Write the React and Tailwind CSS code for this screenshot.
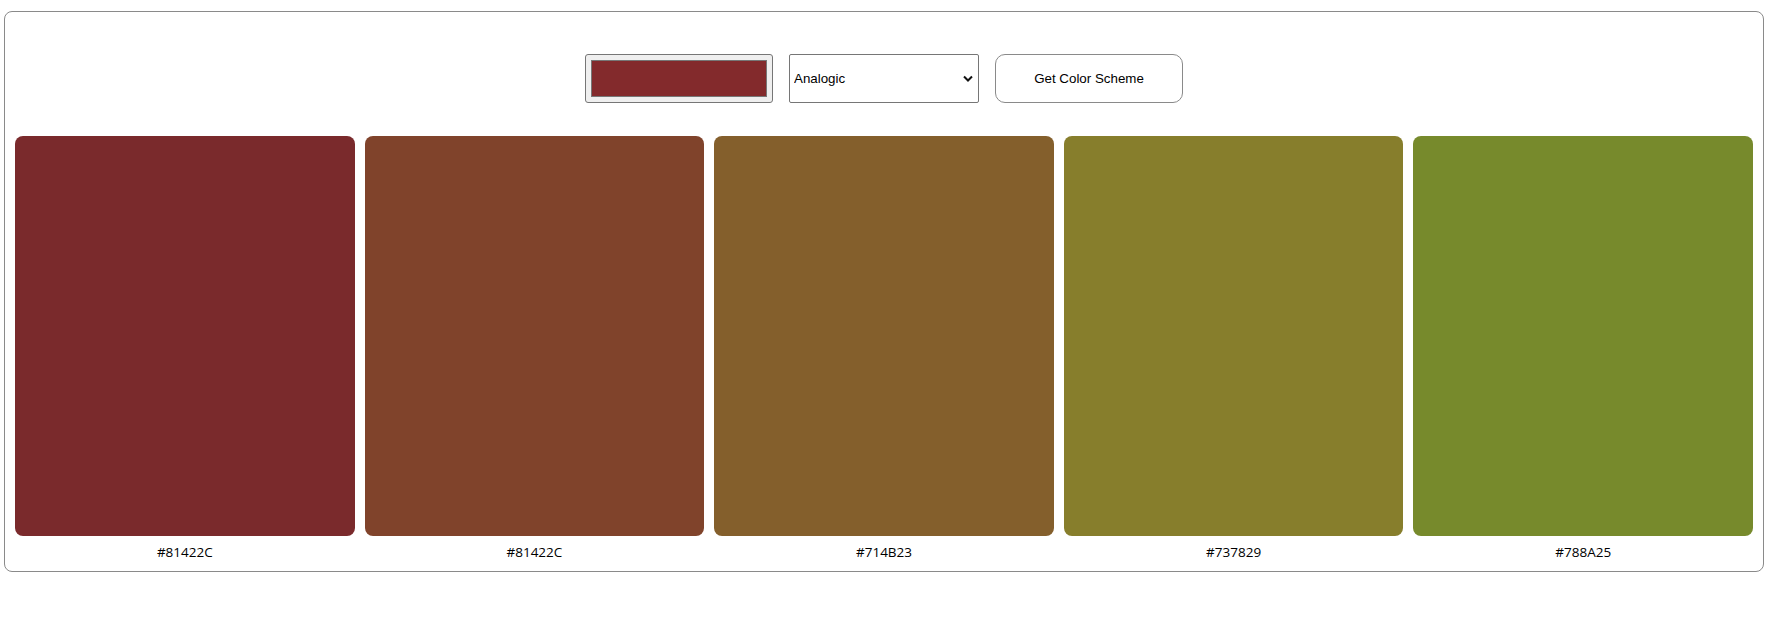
import React, { useState } from "react";

const colors = [
  { bg: "bg-[#7a2a2c]", label: "#81422C" },
  { bg: "bg-[#80432b]", label: "#81422C" },
  { bg: "bg-[#845f2c]", label: "#714B23" },
  { bg: "bg-[#877e2c]", label: "#737829" },
  { bg: "bg-[#778a2c]", label: "#788A25" },
];

const App = () => {
  const [mode, setMode] = useState("analogic");

  return (
    <div className="w-full min-h-[625px] bg-white pt-[11px] pl-[4px]">
      <div className="w-[1760px] h-[561px] border border-[#8a8a8a] rounded-lg pt-[42px] px-[10px] flex flex-col">
        {/* Controls */}
        <div className="flex justify-center gap-[16px]">
          <div className="w-[188px] h-[49px] bg-[#efefef] border border-[#767676] rounded-[3px] p-[5px]">
            <div className="w-full h-full bg-[#832a2c] border border-[#777777]" />
          </div>

          <div className="relative w-[190px] h-[49px]">
            <select
              value={mode}
              onChange={(e) => setMode(e.target.value)}
              className="appearance-none w-full h-full border border-[#767676] rounded-[2px] bg-white pl-[4px] text-[13.33px] text-black outline-none"
              style={{ fontFamily: '"Liberation Sans", Arial, sans-serif' }}
            >
              <option value="monochrome">Monochrome</option>
              <option value="analogic">Analogic</option>
              <option value="complement">Complement</option>
            </select>
            <svg
              className="absolute right-[6px] top-[21px] pointer-events-none"
              width="10"
              height="7"
              viewBox="0 0 10 7"
            >
              <path d="M1 1.5 L5 5.5 L9 1.5" fill="none" stroke="#111" strokeWidth="2" />
            </svg>
          </div>

          <button
            className="w-[188px] h-[49px] border border-[#8a8a8a] rounded-[10px] bg-white text-[13.33px] text-black cursor-pointer"
            style={{ fontFamily: '"Liberation Sans", Arial, sans-serif' }}
          >
            Get Color Scheme
          </button>
        </div>

        {/* Scheme */}
        <div className="grid grid-cols-5 gap-[10px] mt-[33px]">
          {colors.map((c, i) => (
            <div key={i} className="flex flex-col items-center">
              <div className={`w-full h-[400px] rounded-lg ${c.bg}`} />
              <p
                className="mt-[7px] text-[13.5px] leading-[18px] text-black"
                style={{ fontFamily: '"Open Sans", "Noto Sans", sans-serif' }}
              >
                {c.label}
              </p>
            </div>
          ))}
        </div>
      </div>
    </div>
  );
};

export default App;
